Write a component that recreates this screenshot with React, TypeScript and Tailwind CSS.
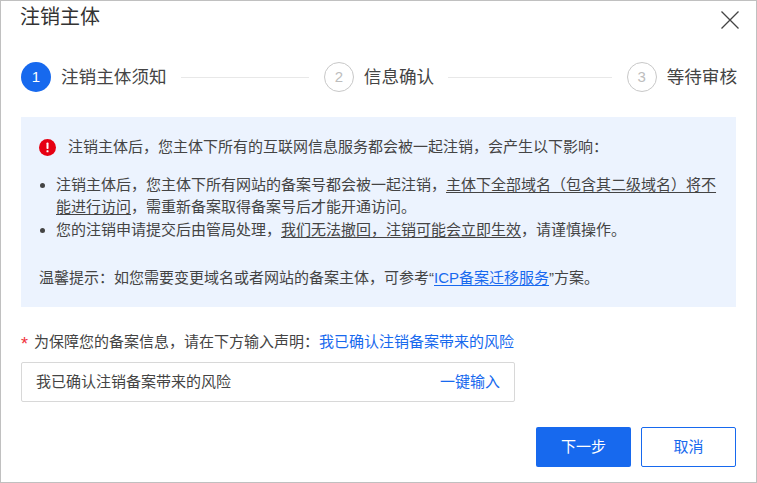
const Step = ({ n, label, active, last }: { n: number; label: string; active?: boolean; last?: boolean }) => (
  <div className={last ? "flex items-center shrink-0" : "flex items-center flex-1"}>
    <div
      className={
        active
          ? "w-[30px] h-[30px] rounded-full bg-[#1769ee] text-white flex items-center justify-center text-[15px] shrink-0"
          : "w-[30px] h-[30px] rounded-full border border-[#c8c8c8] text-[#bdbdbd] flex items-center justify-center text-[15px] shrink-0"
      }
    >
      {n}
    </div>
    <span className="ml-[10px] text-[17.6px] leading-[24px] text-[#444444] whitespace-nowrap">{label}</span>
    {!last && <div className="flex-1 h-px bg-[#e8e8e8] ml-[14px] mr-[15px]" />}
  </div>
);

export default function App() {
  return (
    <div
      className="w-[757px] h-[483px] bg-white border border-[#c0c0c0] overflow-hidden text-[#333333] px-5"
      style={{ fontFamily: '"Liberation Sans","Noto Sans CJK SC",sans-serif' }}
    >
      <div className="flex items-center justify-between h-[32px] mr-[-2px]">
        <h1 className="text-[20px] leading-[32px] font-normal text-[#333333] ml-[-1px]">注销主体</h1>
        <svg width="20" height="20" viewBox="0 0 20 20" fill="none" stroke="#444444" strokeWidth="1.3" className="mt-[5px] mr-[-2px]">
          <path d="M1.5 1.5 L18.5 18.5 M18.5 1.5 L1.5 18.5" />
        </svg>
      </div>

      <div className="flex items-center w-[716px] mt-[29px]">
        <Step n={1} label="注销主体须知" active />
        <Step n={2} label="信息确认" />
        <Step n={3} label="等待审核" last />
      </div>

      <div className="w-[715px] h-[190px] mt-[25px] bg-[#ecf3fe] pl-[18px] pr-[18px] pt-[19px] text-[15px] leading-[22.5px] text-[#444444]">
        <div className="flex items-center">
          <svg width="17" height="17" viewBox="0 0 17 17" className="shrink-0">
            <circle cx="8.5" cy="8.5" r="8.5" fill="#e60012" />
            <rect x="7.5" y="3.5" width="2" height="6.5" rx="0.8" fill="#ffffff" />
            <rect x="7.5" y="11.3" width="2" height="2" rx="0.5" fill="#ffffff" />
          </svg>
          <span className="ml-[12px]">注销主体后，您主体下所有的互联网信息服务都会被一起注销，会产生以下影响：</span>
        </div>
        <ul className="mt-[15px] pl-[17px] list-disc marker:text-[#444444]">
          <li>
            注销主体后，您主体下所有网站的备案号都会被一起注销，
            <span className="underline underline-offset-2">主体下全部域名（包含其二级域名）将不能进行访问</span>
            ，需重新备案取得备案号后才能开通访问。
          </li>
          <li>
            您的注销申请提交后由管局处理，
            <span className="underline underline-offset-2">我们无法撤回，注销可能会立即生效</span>
            ，请谨慎操作。
          </li>
        </ul>
        <p className="mt-[26px]">
          温馨提示：如您需要变更域名或者网站的备案主体，可参考“
          <span className="text-[#1769ee] underline underline-offset-2">ICP备案迁移服务</span>
          ”方案。
        </p>
      </div>

      <div className="flex items-center h-[22px] mt-[24px] text-[15px] text-[#444444]">
        <span className="text-[#f0323c] w-[13px] text-[18px] leading-[22px] pt-[4px]">*</span>
        <span>为保障您的备案信息，请在下方输入声明：</span>
        <span className="text-[#1769ee]">我已确认注销备案带来的风险</span>
      </div>

      <div className="flex items-center justify-between w-[494px] h-[40px] mt-[9px] border border-[#d8d8d8] rounded-[2px] pl-[14px] pr-[14px] text-[15px]">
        <span className="text-[#444444]">我已确认注销备案带来的风险</span>
        <span className="text-[#1769ee]">一键输入</span>
      </div>

      <div className="flex justify-end gap-[10px] w-[715px] mt-[25px]">
        <button className="w-[95px] h-[40px] rounded-[2px] bg-[#1769ee] text-white text-[15px]">下一步</button>
        <button className="w-[95px] h-[40px] rounded-[2px] border border-[#1769ee] text-[#1769ee] text-[15px]">取消</button>
      </div>
    </div>
  );
}
